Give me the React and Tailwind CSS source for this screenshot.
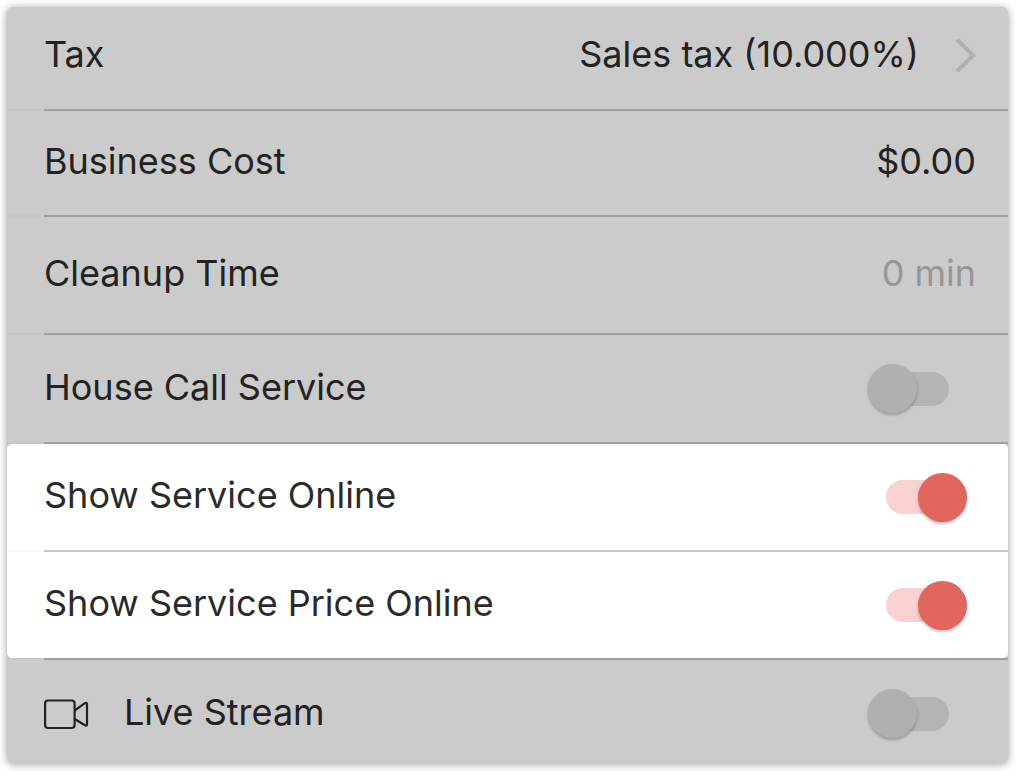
import React from "react";

const line = "ml-[37px] h-[2px]";

function Divider({ light = false }) {
  return (
    <div className={light ? "bg-[#f9f9f9]" : "bg-[#c7c7c7]"}>
      <div className={`${line} ${light ? "bg-[#c6c6c6]" : "bg-[#a0a0a0]"}`} />
    </div>
  );
}

function Row({ className = "", children }) {
  return (
    <div className={`flex items-center justify-between gap-4 pl-[37px] ${className}`}>
      {children}
    </div>
  );
}

function Toggle({ id, defaultChecked = false }) {
  return (
    <input
      id={id}
      type="checkbox"
      role="switch"
      defaultChecked={defaultChecked}
      className="mr-[59px] grid h-[50px] w-[81px] shrink-0 cursor-pointer appearance-none items-center before:col-start-1 before:row-start-1 before:h-[34px] before:rounded-full before:bg-[#b4b4b4] before:content-[''] after:col-start-1 after:row-start-1 after:size-[49px] after:rounded-full after:bg-[#b0b0b0] after:shadow-[0_2px_3px_rgba(0,0,0,0.25)] after:content-[''] checked:mr-[41px] checked:before:bg-[#f8d1d0] checked:after:justify-self-end checked:after:bg-[#e16660]"
    />
  );
}

function VideoIcon() {
  return (
    <svg width="45" height="32" viewBox="0 0 45 32" fill="none" stroke="#222222" strokeWidth="2.2" strokeLinejoin="round" aria-hidden="true">
      <rect x="1.1" y="2.5" width="29.5" height="27.5" rx="3" />
      <path d="M30.6 12.5 L41 5.2 Q43 4.2 43 6.2 V26.2 Q43 28.2 41 27.2 L30.6 21" />
    </svg>
  );
}

export default function App() {
  return (
    <main className="bg-white pt-[7px] pr-2 pb-2 pl-[7px] font-['Inter',sans-serif] text-[36px] leading-[48px] font-normal text-[#222222]">
      <form className="rounded-[6px] bg-[#cbcbcb] shadow-[0_1px_8px_rgba(0,0,0,0.4)]">
        <Row className="h-[102px] pr-8 pb-2">
          <span id="tax-label">Tax</span>
          <button type="button" aria-labelledby="tax-label tax-value" className="flex cursor-pointer items-center gap-9">
            <span id="tax-value">Sales tax (10.000%)</span>
            <svg width="21" height="36" viewBox="0 0 21 36" fill="none" stroke="#b0b0b0" strokeWidth="4" aria-hidden="true">
              <path d="M2 3.5 L18 19.5 L2 35.5" />
            </svg>
          </button>
        </Row>
        <Divider />
        <Row className="h-[104px] pr-8 pb-1">
          <label htmlFor="cost">Business Cost</label>
          <input id="cost" type="text" defaultValue="$0.00" className="w-48 bg-transparent text-right outline-none" />
        </Row>
        <Divider />
        <Row className="h-[116px] pr-8 pb-1">
          <label htmlFor="cleanup">Cleanup Time</label>
          <input id="cleanup" type="text" placeholder="0 min" className="w-48 bg-transparent text-right outline-none placeholder:text-[#969696]" />
        </Row>
        <Divider />
        <Row className="h-[107px]">
          <label htmlFor="house" className="pb-1">House Call Service</label>
          <Toggle id="house" />
        </Row>
        <Divider />
        <div className="rounded-[5px] bg-white text-[#2a2a2a]">
          <Row className="h-[106px]">
            <label htmlFor="online" className="pb-1">Show Service Online</label>
            <Toggle id="online" defaultChecked />
          </Row>
          <Divider light />
          <Row className="h-[106px]">
            <label htmlFor="price" className="pb-1">Show Service Price Online</label>
            <Toggle id="price" defaultChecked />
          </Row>
        </div>
        <Divider />
        <Row className="h-[103px] pt-1">
          <label htmlFor="live" className="flex items-center gap-[35px]">
            <VideoIcon />
            <span className="pb-1">Live Stream</span>
          </label>
          <Toggle id="live" />
        </Row>
      </form>
    </main>
  );
}
